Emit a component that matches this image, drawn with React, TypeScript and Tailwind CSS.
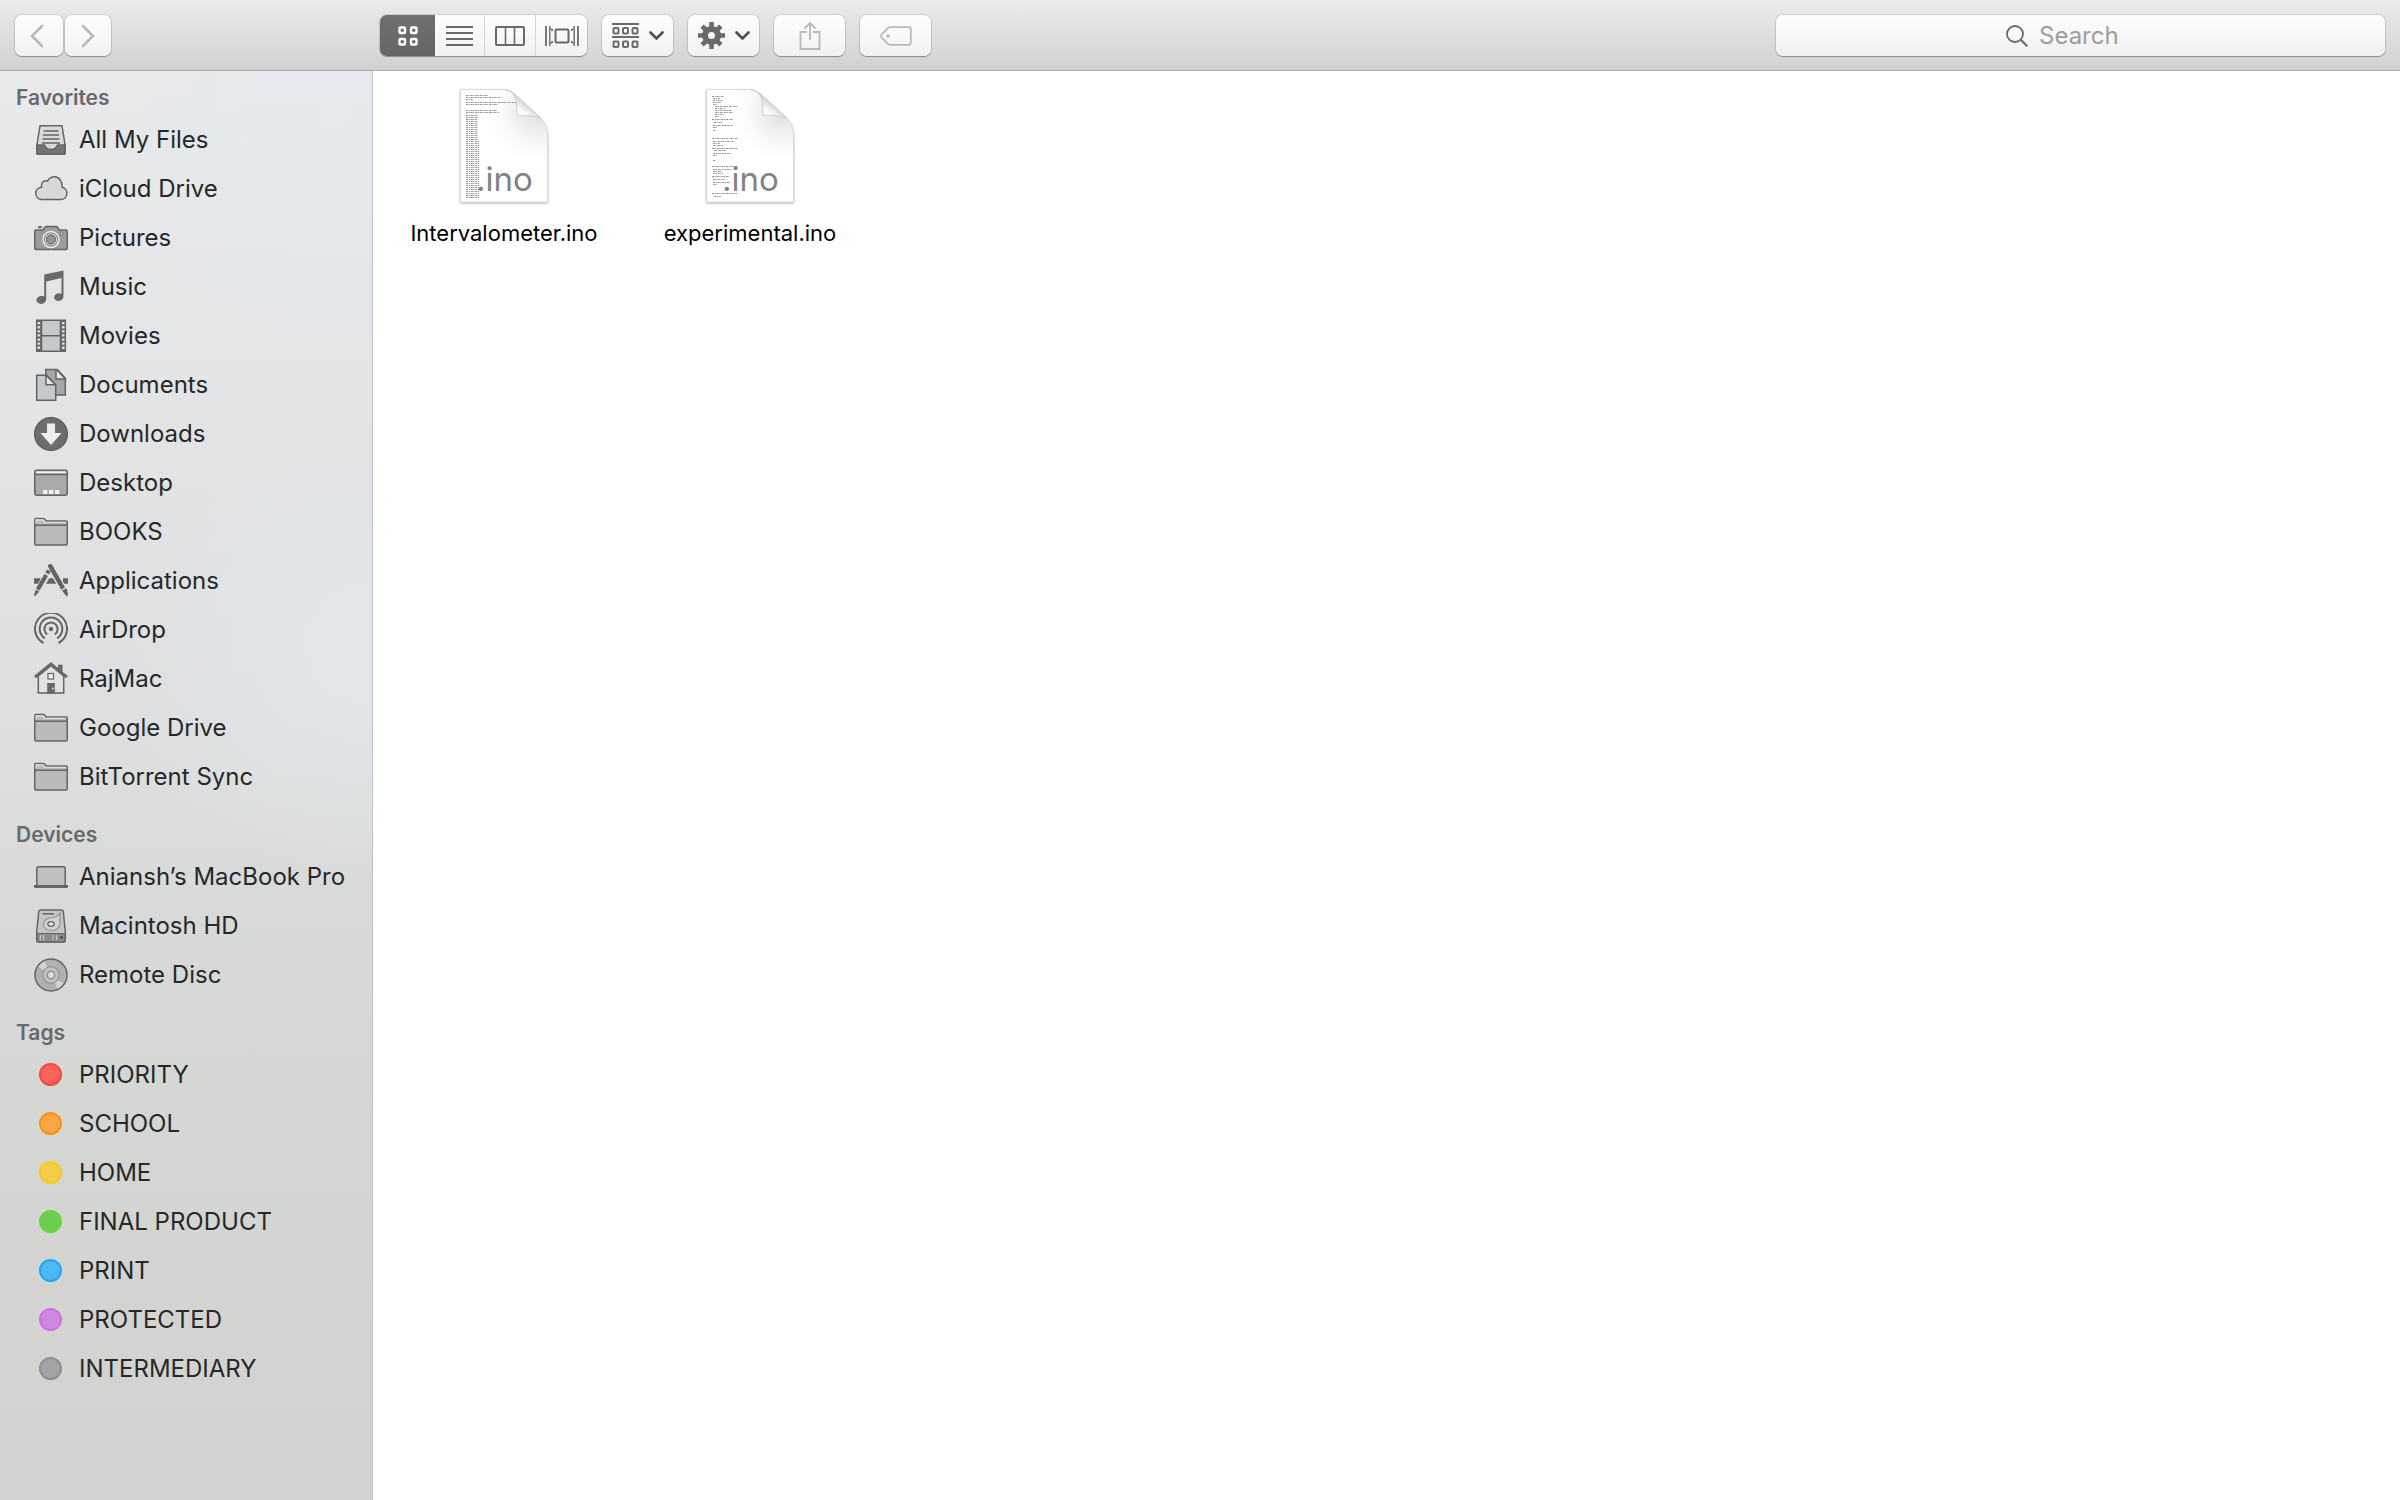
import React from "react";

type IconProps = { children: React.ReactNode };

// Every sidebar glyph is drawn on the same 34px canvas
const SideIcon = ({ children }: IconProps) => (
  <svg
    viewBox="0 0 34 34"
    className="size-[34px] shrink-0"
    fill="none"
    stroke="#626466"
    strokeWidth="1.5"
    aria-hidden="true"
  >
    {children}
  </svg>
);

const AllFilesIcon = () => (
  <SideIcon>
    <path d="M6 2.800h22l3 18.700V31H3v-9.500z" fill="#d9dadb" strokeLinejoin="round" />
    <path d="M9.500 8h15M9 12h16M8.500 16h17M8 20h18" strokeWidth="1.400" />
    <path d="M3 22h7.500c1 3 3.500 4.500 6.500 4.500s5.500-1.500 6.500-4.500H31v9H3z" fill="#737476" strokeLinejoin="round" />
  </SideIcon>
);

const CloudIcon = () => (
  <SideIcon>
    <path
      d="M7 27.500h20a6.200 6.200 0 0 0 1.300-12.200C28.300 9 25 4.800 20.400 4.800c-3 0-5.500 1.700-6.900 4.300-2.800-1.200-6 .6-6 4.200v1.900A6.200 6.200 0 0 0 7 27.500z"
      fill="#d6d8d9"
    />
  </SideIcon>
);

const CameraIcon = () => (
  <SideIcon>
    <path d="M4 6.200h4" strokeWidth="2" />
    <path
      d="M1.800 9H9l2-2.800c.3-.4.700-.6 1.200-.6h10c.5 0 .9.200 1.200.6L25.500 9h6.700c.6 0 1 .4 1 1v17.500c0 .6-.4 1-1 1H1.800c-.6 0-1-.4-1-1V10c0-.6.4-1 1-1z"
      fill="#9a9c9e"
    />
    <circle cx="17" cy="18.500" r="8" stroke="#e9eaeb" strokeWidth="1.500" fill="#8d8f91" />
    <circle cx="17" cy="18.500" r="5.500" fill="#929496" stroke="#dcdddd" strokeWidth="1.200" />
    <circle cx="17" cy="18.500" r="4.500" stroke="#626466" strokeWidth="1" />
    <circle cx="27.500" cy="12.500" r="1.500" fill="#dcdddd" strokeWidth="1" />
  </SideIcon>
);

const MusicIcon = () => (
  <SideIcon>
    <path
      d="M29.500.5v25.800c0 2.600-2 4.700-5 4.700-2.500 0-4.300-1.400-4.300-3.500 0-2.500 2.200-4.300 4.900-4.300.9 0 1.900.2 2.400.5V8L12.200 11.400v17.300c0 3-2.200 5.200-5.200 5.200-2.500 0-4.500-1.500-4.500-3.600 0-2.600 2.300-4.300 5-4.300 1 0 2 .1 2.700.5V4.500z"
      fill="#66686a"
      stroke="none"
    />
  </SideIcon>
);

const MoviesIcon = () => (
  <SideIcon>
    <path d="M2.700 1.200h28.600v31H2.700z" fill="#c6c9cc" />
    <path d="M4.600 1.200v31M29.400 1.200v31" stroke="#626466" strokeWidth="4.500" />
    <path d="M4.700 3v28M29.300 3v28" stroke="#e4e6e8" strokeWidth="2.400" strokeDasharray="2.300 1.800" />
    <path d="M7.500 1.500v30.400M26.500 1.500v30.400M7.500 16.700h19" />
  </SideIcon>
);

const DocumentsIcon = () => (
  <SideIcon>
    <path d="M11.700 1.500h11.600l8 8.500v17H11.700z" fill="#a5a7a9" />
    <path d="M22 1.500V11h9.300L22.600 1.500" fill="#e4e6e8" />
    <path d="M2.700 7.200h10l9 9.500v15.500h-19z" fill="#c6c9cc" />
    <path d="M12 7.200v9.600h9.500z" fill="#e4e6e8" strokeLinejoin="round" />
  </SideIcon>
);

const DownloadsIcon = () => (
  <SideIcon>
    <circle cx="17" cy="17" r="16.300" fill="#6b6d6f" stroke="#5d5f61" />
    <path d="M13 6.500h8V16h6.500L17 28 6.500 16H13z" fill="#eceded" stroke="none" />
  </SideIcon>
);

const DesktopIcon = () => (
  <SideIcon>
    <rect x="0.800" y="4.300" width="32.400" height="25" rx="2" fill="#a7a9ab" />
    <path d="M2 6.300h30" stroke="#f0f1f1" strokeWidth="2" />
    <path d="M1 8.500h32" />
    <path d="M9 26h4.300M15 26h4.300M21 26h4.300" stroke="#f0f1f1" strokeWidth="3.800" />
  </SideIcon>
);

const FolderIcon = () => (
  <SideIcon>
    <path
      d="M.8 29V4.500c0-.6.400-1 1-1h7.700c.4 0 .8.200 1 .5l1.700 2h20c.6 0 1 .4 1 1v22c0 .6-.4 1-1 1H1.800c-.6 0-1-.4-1-1z"
      fill="#b8babb"
    />
    <path d="M2.200 8.300V5h7l1.800 2.300h21" stroke="#dcdedf" strokeWidth="1.300" />
    <path d="M1 10.200h32" />
  </SideIcon>
);

const ApplicationsIcon = () => (
  <SideIcon>
    <path d="M0 17h6.500M11.500 17h11M29 17h5" strokeWidth="5.500" />
    <path d="M15.300 7 2.800 28.800" stroke="#dfe2e3" strokeWidth="7" />
    <path d="M16.300 2.500 29.500 25.500" stroke="#dfe2e3" strokeWidth="7" />
    <path d="M14.800 6.500 13.200 9.500M12.200 11 3.800 25.500" strokeWidth="4.200" />
    <path d="M1.800 25.500 5.400 27.600 1 32.200 0 31.600z" fill="#626466" stroke="none" />
    <path d="M16.300 2.200 26.500 20" strokeWidth="4.500" strokeLinecap="round" />
    <path d="m27.300 21.500 1.800 3" strokeWidth="4.500" />
    <path d="m28 26.500 4.500-2.200 1.500 5.200-.6 2.700-1 .1z" fill="#626466" stroke="none" />
  </SideIcon>
);

const AirDropIcon = () => (
  <SideIcon>
    <g strokeWidth="2">
      <path d="M9.500 30A16 16 0 1 1 24.500 30" />
      <path d="M10.800 25.300A11.300 11.300 0 1 1 23.200 25.300" />
      <path d="M13.200 21.400A6.600 6.600 0 1 1 20.800 21.400" />
    </g>
    <circle cx="17" cy="16" r="2.200" fill="#626466" stroke="none" />
  </SideIcon>
);

const HomeIcon = () => (
  <SideIcon>
    <path d="M4.300 14 17 3.500 29.700 14v17H4.300z" fill="#dfe1e2" />
    <path d="M17 0 24 6V2.700h4.500v7L34 14l-2 2.200L17 4.500 2 16.200 0 14z" fill="#66686a" stroke="none" />
    <rect x="14" y="11.500" width="5.500" height="5.500" fill="#f0f1f1" strokeWidth="1.200" />
    <path d="M13.200 21h7.600v10.500h-7.600z" fill="#66686a" stroke="none" />
    <circle cx="18.800" cy="26.500" r="0.900" fill="#e4e6e8" stroke="none" />
  </SideIcon>
);

const LaptopIcon = () => (
  <SideIcon>
    <rect x="2.800" y="6.800" width="28.400" height="19" rx="1.500" fill="#bfc1c1" />
    <path d="M0 25h34v1.500c0 .9-.7 1.500-1.500 1.500h-31C.7 28 0 27.400 0 26.500z" fill="#626466" stroke="none" />
  </SideIcon>
);

const HardDriveIcon = () => (
  <SideIcon>
    <path d="M6.500 1h21c1 0 1.600.6 1.800 1.600l2 20.400v8.500c0 .9-.6 1.500-1.500 1.500H4.200c-.9 0-1.500-.6-1.500-1.500V23l2-20.400C4.900 1.600 5.500 1 6.500 1z" fill="#c4c6c6" />
    <path d="M3 24.500h28v7c0 .8-.5 1.300-1.300 1.300H4.300c-.8 0-1.300-.5-1.300-1.300z" fill="#8b8d8d" strokeWidth="1.200" />
    <path d="M8.500 4.800H20" />
    <path
      d="M26 4c-2 3-4 4.200-7 4.500-5 0-9.500 2.700-9.500 6.700S13 21.500 17.500 21.500s8.500-2.700 8.500-7z"
      stroke="#8f9191"
      strokeWidth="1.200"
      fill="#d0d2d2"
    />
    <ellipse cx="17" cy="15" rx="3.200" ry="2.300" strokeWidth="1.200" fill="#e0e2e2" />
    <path d="M6.500 26v5.500M9.500 26v5.500M19 26v5.500M22.500 26v5.500" stroke="#c4c6c6" strokeWidth="1.200" />
    <path d="M26 28.500h3" stroke="#414343" strokeWidth="2" />
  </SideIcon>
);

const DiscIcon = () => (
  <SideIcon>
    <circle cx="17" cy="17" r="16" fill="#b0b2b2" />
    <path d="M17 17 4.500 8.500A15.200 15.200 0 0 1 10.500 3.300zM17 17l12.500 8.500a15.200 15.200 0 0 1-6 5.200z" fill="#d3d5d5" stroke="none" />
    <circle cx="17" cy="17" r="8.300" stroke="#8f9191" strokeWidth="1.200" fill="#c0c2c2" />
    <circle cx="17" cy="17" r="3.700" fill="#dcdede" stroke="#8f9191" strokeWidth="1.500" />
  </SideIcon>
);

const favorites = [
  { name: "All My Files", icon: <AllFilesIcon /> },
  { name: "iCloud Drive", icon: <CloudIcon /> },
  { name: "Pictures", icon: <CameraIcon /> },
  { name: "Music", icon: <MusicIcon /> },
  { name: "Movies", icon: <MoviesIcon /> },
  { name: "Documents", icon: <DocumentsIcon /> },
  { name: "Downloads", icon: <DownloadsIcon /> },
  { name: "Desktop", icon: <DesktopIcon /> },
  { name: "BOOKS", icon: <FolderIcon /> },
  { name: "Applications", icon: <ApplicationsIcon /> },
  { name: "AirDrop", icon: <AirDropIcon /> },
  { name: "RajMac", icon: <HomeIcon /> },
  { name: "Google Drive", icon: <FolderIcon /> },
  { name: "BitTorrent Sync", icon: <FolderIcon /> },
];

const devices = [
  { name: "Aniansh’s MacBook Pro", icon: <LaptopIcon /> },
  { name: "Macintosh HD", icon: <HardDriveIcon /> },
  { name: "Remote Disc", icon: <DiscIcon /> },
];

const tagColors = [
  { name: "PRIORITY", dot: "bg-[#ff625c] border-[#fb4640]" },
  { name: "SCHOOL", dot: "bg-[#faa645] border-[#fc9214]" },
  { name: "HOME", dot: "bg-[#f4ce4a] border-[#fbc917]" },
  { name: "FINAL PRODUCT", dot: "bg-[#6dcd50] border-[#62d83b]" },
  { name: "PRINT", dot: "bg-[#4db8f9] border-[#22a9f5]" },
  { name: "PROTECTED", dot: "bg-[#d087e2] border-[#cb72e2]" },
  { name: "INTERMEDIARY", dot: "bg-[#a3a3a5] border-[#8f8f92]" },
];

const tags = tagColors.map((tag) => ({
  name: tag.name,
  icon: (
    <span className="w-[34px] shrink-0 pl-[5px]">
      <span className={`block size-[23px] rounded-full border-2 ${tag.dot}`} />
    </span>
  ),
}));

type SectionProps = {
  title: string;
  items: { name: string; icon: React.ReactNode }[];
};

const SidebarSection = ({ title, items }: SectionProps) => (
  <section>
    <h2 className="h-[34px] pl-4 text-[21px] leading-[34px] font-semibold text-[#67696b]">
      {title}
    </h2>
    <ul>
      {items.map((item) => (
        <li key={item.name}>
          <a
            href="#"
            className="flex h-[49px] items-center gap-[11px] pl-[34px] text-[24px] whitespace-nowrap text-[#262829]"
          >
            {item.icon}
            {item.name}
          </a>
        </li>
      ))}
    </ul>
  </section>
);

const buttonFace =
  "flex items-center justify-center bg-gradient-to-b from-[#fefefe] to-[#f1f1f1]";
const buttonShadow =
  "rounded-[7px] shadow-[0_0_0_1px_rgba(0,0,0,0.1),0_1px_1px_rgba(0,0,0,0.28)]";

type ToolButtonProps = {
  label: string;
  className?: string;
  children: React.ReactNode;
};

const ToolButton = ({ label, className = "w-[71px]", children }: ToolButtonProps) => (
  <button
    type="button"
    aria-label={label}
    className={`h-[41px] shrink-0 ${buttonFace} ${buttonShadow} ${className}`}
  >
    {children}
  </button>
);

const ChevronDown = () => (
  <svg width="15" height="10" viewBox="0 0 15 10" fill="none" stroke="#4d4d4d" strokeWidth="2.600">
    <path d="m1.500 1.500 6 6 6-6" strokeLinecap="round" />
  </svg>
);

const Toolbar = () => (
  <header className="flex h-[71px] shrink-0 items-start border-b border-[#a9a9a9] bg-gradient-to-b from-[#ebebeb] to-[#d1d1d1] p-[15px]">
    <nav className="flex w-[365px] shrink-0 gap-[2px]">
      <ToolButton label="Back" className="w-[48px] pr-1">
        <svg width="14" height="24" viewBox="0 0 14 24" fill="none" stroke="#b9b9b9" strokeWidth="2.600" strokeLinecap="round">
          <path d="M12 2 2 12l10 10" />
        </svg>
      </ToolButton>
      <ToolButton label="Forward" className="w-[46px]">
        <svg width="14" height="24" viewBox="0 0 14 24" fill="none" stroke="#b9b9b9" strokeWidth="2.600" strokeLinecap="round">
          <path d="m2 2 10 10L2 22" />
        </svg>
      </ToolButton>
    </nav>

    <div className="flex gap-[15px]">
      {/* View switcher */}
      <div className={`flex h-[41px] overflow-hidden ${buttonShadow}`}>
        <button
          type="button"
          aria-label="Icons"
          aria-pressed="true"
          className="flex w-[55px] items-center justify-center bg-gradient-to-b from-[#6f6f6f] to-[#656565]"
        >
          <svg width="20" height="20" viewBox="0 0 20 20" fill="none" stroke="#ffffff" strokeWidth="2.400">
            <rect x="1.500" y="1.500" width="5.500" height="5.500" rx="1" />
            <rect x="13" y="1.500" width="5.500" height="5.500" rx="1" />
            <rect x="1.500" y="13" width="5.500" height="5.500" rx="1" />
            <rect x="13" y="13" width="5.500" height="5.500" rx="1" />
          </svg>
        </button>
        <button type="button" aria-label="List" className={`w-[50px] border-r border-[#d6d6d6] ${buttonFace}`}>
          <svg width="27" height="20" viewBox="0 0 27 20" stroke="#6a6a6a" strokeWidth="2">
            <path d="M0 1h27M0 7h27M0 13h27M0 19h27" />
          </svg>
        </button>
        <button type="button" aria-label="Columns" className={`w-[51px] border-r border-[#d6d6d6] ${buttonFace}`}>
          <svg width="30" height="20" viewBox="0 0 30 20" fill="none" stroke="#6a6a6a" strokeWidth="2">
            <rect x="1" y="1" width="28" height="18" rx="1" />
            <path d="M10.500 1v18M19.500 1v18" strokeWidth="1.600" />
          </svg>
        </button>
        <button type="button" aria-label="Cover Flow" className={`w-[51px] ${buttonFace}`}>
          <svg width="34" height="20" viewBox="0 0 34 20" fill="none" stroke="#6a6a6a" strokeWidth="2">
            <rect x="10.500" y="3.500" width="13" height="13" rx="1" />
            <path d="M1 0v20M33 0v20" strokeWidth="1.800" />
            <path d="M4.800 0v20M29.200 0v20" strokeWidth="1.400" />
            <path d="M5 2.500 7.500 4M5 17.500 7.500 16M29 2.500 26.500 4M29 17.500 26.500 16" strokeWidth="1.400" />
            <path d="M7.300 15v2M26.700 15v2M7.300 3v2M26.700 3v2" strokeWidth="1.400" />
          </svg>
        </button>
      </div>

      <ToolButton label="Arrange" className="w-[71px] gap-[10px]">
        <svg width="27" height="26" viewBox="0 0 27 26" fill="none" stroke="#6a6a6a" strokeWidth="2">
          <path d="M0 1h27M0 14h27" />
          <rect x="1.500" y="5" width="5" height="5.500" rx="1" />
          <rect x="11" y="5" width="5" height="5.500" rx="1" />
          <rect x="20.500" y="5" width="5" height="5.500" rx="1" />
          <rect x="1.500" y="18.500" width="5" height="5.500" rx="1" />
          <rect x="11" y="18.500" width="5" height="5.500" rx="1" />
          <rect x="20.500" y="18.500" width="5" height="5.500" rx="1" />
        </svg>
        <ChevronDown />
      </ToolButton>

      <ToolButton label="Action" className="w-[71px] gap-[10px]">
        <svg width="27" height="27" viewBox="-13.500 -13.500 27 27" fill="none" stroke="#6a6a6a">
          <circle r="6.500" strokeWidth="6" />
          <path
            d="M0-8.500v-5M0 8.500v5M-8.500 0h-5M8.500 0h5M6-6l3.400-3.400M-6 6l-3.400 3.400M6 6l3.400 3.400M-6-6l-3.400-3.400"
            strokeWidth="4.600"
          />
        </svg>
        <ChevronDown />
      </ToolButton>

      <ToolButton label="Share">
        <svg width="22" height="30" viewBox="0 0 22 30" fill="none" stroke="#b9b9b9" strokeWidth="1.800">
          <path d="M8 11H1.500v17h19V11H14M11 19V2M5.500 7.500 11 2l5.500 5.500" />
        </svg>
      </ToolButton>

      <ToolButton label="Edit Tags">
        <svg width="32" height="20" viewBox="0 0 32 20" fill="none" stroke="#b9b9b9" strokeWidth="1.800">
          <path d="M10 1.200h18.500c1.300 0 2.300 1 2.300 2.300v13c0 1.300-1 2.300-2.300 2.300H10c-.8 0-1.500-.3-2-.8l-6.300-6.500a2.200 2.200 0 0 1 0-3L8 2c.5-.5 1.200-.8 2-.8z" />
          <circle cx="8" cy="10" r="1.800" fill="#b9b9b9" stroke="none" />
        </svg>
      </ToolButton>
    </div>

    <label
      className={`ml-auto flex h-[41px] w-[609px] items-center justify-center gap-[11px] bg-gradient-to-b from-[#fefefe] to-[#f0f0f0] pr-7 ${buttonShadow}`}
    >
      <svg width="22" height="22" viewBox="0 0 22 22" fill="none" stroke="#6a6a6a" strokeWidth="1.800" aria-hidden="true">
        <circle cx="9" cy="9" r="8" />
        <path d="m14.800 14.800 6.500 6.500" strokeWidth="2.200" />
      </svg>
      <input
        type="text"
        aria-label="Search"
        placeholder="Search"
        className="w-[88px] bg-transparent text-[24px] leading-[32px] text-[#333] outline-none placeholder:text-[#9d9d9d]"
      />
    </label>
  </header>
);

const Sidebar = () => (
  <aside className="w-[373px] shrink-0 border-r border-[#bfc1c2] bg-[radial-gradient(260px_240px_at_90%_3%,rgba(228,234,240,0.8),transparent),radial-gradient(260px_220px_at_100%_41%,rgba(228,232,236,0.9),transparent),linear-gradient(to_bottom,#e8e9ea_0%,#e3e5e7_18%,#dfe1e3_36%,#dcdedf_48%,#d8dad9_58%,#d4d6d3_75%,#d2d2d0_100%)] pt-[10px]">
    <div className="flex flex-col gap-[17px]">
      <SidebarSection title="Favorites" items={favorites} />
      <SidebarSection title="Devices" items={devices} />
      <SidebarSection title="Tags" items={tags} />
    </div>
  </aside>
);

// Tiny source listing previewed on the page: [x, y, length]
const intervalometerLines = [
  [6, 6, 22], [6, 8, 34], [6, 10, 7], [6, 13, 50], [6, 15, 32],
  [6, 21, 31], [6, 23, 33],
];
for (let y = 26; y < 110; y += 2) {
  intervalometerLines.push([6, y, y < 52 ? 12 : 13]);
}

const experimentalLines = [
  [6, 7, 12], [7, 9, 7], [7, 11, 10], [7, 13, 9], [7, 15, 4], [9, 17, 23], [9, 19, 10],
  [9, 21, 17], [9, 23, 18], [9, 25, 9], [9, 27, 4], [6, 30, 21], [8, 33, 9], [7, 36, 20],
  [7, 38, 4], [7, 41, 3], [6, 49, 26], [7, 52, 21], [7, 54, 7], [7, 56, 10], [6, 59, 25],
  [8, 61, 12], [7, 64, 18], [7, 66, 4], [7, 71, 3], [6, 77, 26], [7, 80, 19], [7, 82, 9],
  [7, 84, 10], [6, 87, 18], [7, 90, 12], [7, 93, 17], [7, 95, 4], [6, 104, 26], [8, 107, 7],
];

type FileIconProps = { id: string; lines: number[][] };

const FileIcon = ({ id, lines }: FileIconProps) => (
  <svg width="96" height="120" viewBox="-4 -3 96 120" aria-hidden="true">
    <defs>
      <radialGradient id={`${id}-page`} gradientUnits="userSpaceOnUse" cx="78" cy="22" r="52">
        <stop offset="0" stopColor="#dcdcdc" />
        <stop offset="0.300" stopColor="#eaeaea" />
        <stop offset="0.700" stopColor="#fafafa" />
        <stop offset="1" stopColor="#ffffff" />
      </radialGradient>
      <linearGradient id={`${id}-fold`} x1="0" y1="1" x2="0.550" y2="0.450">
        <stop offset="0" stopColor="#ffffff" />
        <stop offset="0.650" stopColor="#fbfbfb" />
        <stop offset="1" stopColor="#d6d6d6" />
      </linearGradient>
      <filter id={`${id}-shadow`} x="-10%" y="-10%" width="120%" height="120%">
        <feDropShadow dx="0" dy="1" stdDeviation="1.200" floodColor="#000000" floodOpacity="0.350" />
      </filter>
    </defs>
    <path
      d="M1 0.500H42c6 0 10.500 2.500 14.500 6.500L80 28.500c5 5 7.500 11 7.500 18V113H0.500V1z"
      fill={`url(#${id}-page)`}
      stroke="#cfcfcf"
      strokeWidth="0.700"
      filter={`url(#${id}-shadow)`}
    />
    <g stroke="#7c7c7c" strokeWidth="1" strokeDasharray="2.200 0.600 1 0.800" opacity="0.800">
      {lines.map(([x, y, length]) => (
        <path key={y} d={`M${x} ${y + 0.5}h${length}`} />
      ))}
    </g>
    <path
      d="M45 .8c6 .5 10.500 5 11.500 13.200.4 4 .5 8 .5 12.500 8-.5 16 0 23.500 2.500L56.500 7C53 3.500 49.500 1.500 45 .8z"
      fill={`url(#${id}-fold)`}
      stroke="#c4c4c4"
      strokeWidth="0.700"
    />
    <text x="16" y="102" fontFamily="Inter, sans-serif" fontSize="33" fill="#828282">
      .ino
    </text>
  </svg>
);

const files = [
  { name: "Intervalometer.ino", id: "intervalometer", lines: intervalometerLines },
  { name: "experimental.ino", id: "experimental", lines: experimentalLines },
];

const App = () => (
  <div className="flex min-h-screen flex-col bg-white font-['Inter',sans-serif]">
    <Toolbar />
    <div className="flex flex-1">
      <Sidebar />
      <main className="flex-1 px-2 pt-[15px]">
        <ul className="flex flex-wrap">
          {files.map((file) => (
            <li key={file.id} className="w-[246px]">
              <a href="#" className="flex flex-col items-center gap-[11px] text-[22px] leading-[32px] text-black">
                <FileIcon id={file.id} lines={file.lines} />
                {file.name}
              </a>
            </li>
          ))}
        </ul>
      </main>
    </div>
  </div>
);

export default App;
